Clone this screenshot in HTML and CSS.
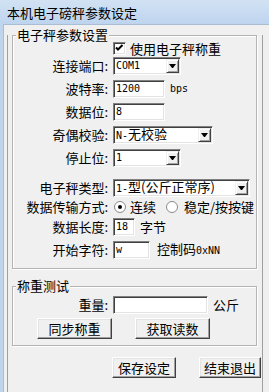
FILE: index.html
```html
<!DOCTYPE html>
<html>

<head>
    <meta charset="utf-8">
    <title>本机电子磅秤参数设定</title>
    <link rel="stylesheet" href="styles.css">
</head>

<body>
    <div class="window">
        <div class="titlebar">本机电子磅秤参数设定</div>
        <div class="client">
            <div class="panel">
                <div class="group group-main">
                    <span class="group-title">电子秤参数设置</span>

                    <div class="row row-check">
                        <span class="label"></span>
                        <span class="checkbox">
                            <svg width="11" height="11" viewBox="0 0 11 11">
                                <polyline points="2,4.5 4,6.5 8.5,2" fill="none" stroke="#000" stroke-width="2" />
                            </svg>
                        </span>
                        <span class="check-text">使用电子秤称重</span>
                    </div>

                    <div class="row row-port">
                        <span class="label">连接端口:</span>
                        <div class="field combo w-port"><span class="en">COM1</span><span class="drop"></span></div>
                    </div>

                    <div class="row">
                        <span class="label">波特率:</span>
                        <div class="field w-short"><span class="en">1200</span></div>
                        <span class="unit en">bps</span>
                    </div>

                    <div class="row">
                        <span class="label">数据位:</span>
                        <div class="field w-short"><span class="en">8</span></div>
                    </div>

                    <div class="row">
                        <span class="label">奇偶校验:</span>
                        <div class="field combo w-parity"><span class="value"><span class="en">N-</span>无校验</span><span class="drop"></span></div>
                    </div>

                    <div class="row">
                        <span class="label">停止位:</span>
                        <div class="field combo w-port"><span class="en">1</span><span class="drop"></span></div>
                    </div>

                    <div class="row row-type">
                        <span class="label">电子秤类型:</span>
                        <div class="field combo w-type"><span class="value"><span class="en">1-</span>型(公斤正常序)</span><span class="drop"></span></div>
                    </div>

                    <div class="row row-mode">
                        <span class="label">数据传输方式:</span>
                        <span class="radio">
                            <svg width="12" height="12" viewBox="0 0 12 12">
                                <circle cx="6" cy="6" r="5.5" fill="#fff" stroke="#8a8a8a" />
                                <circle cx="6" cy="6" r="2" fill="#000" />
                            </svg>
                        </span>
                        <span class="radio-text">连续</span>
                        <span class="radio radio-second">
                            <svg width="12" height="12" viewBox="0 0 12 12">
                                <circle cx="6" cy="6" r="5.5" fill="#fff" stroke="#8a8a8a" />
                            </svg>
                        </span>
                        <span class="radio-text radio-text-second">稳定/按按键</span>
                    </div>

                    <div class="row row-len">
                        <span class="label">数据长度:</span>
                        <div class="field w-len"><span class="en">18</span></div>
                        <span class="unit">字节</span>
                    </div>

                    <div class="row">
                        <span class="label">开始字符:</span>
                        <div class="field w-start"><span class="en">w</span></div>
                        <span class="unit unit-wide">控制码<span class="en">0xNN</span></span>
                    </div>
                </div>

                <div class="group group-test">
                    <span class="group-title">称重测试</span>

                    <div class="row row-weight">
                        <span class="label">重量:</span>
                        <div class="field w-weight"></div>
                        <span class="unit">公斤</span>
                    </div>

                    <div class="button-row">
                        <button class="btn btn-sync">同步称重</button>
                        <button class="btn btn-read">获取读数</button>
                    </div>
                </div>

                <div class="footer">
                    <button class="btn btn-save">保存设定</button>
                    <button class="btn btn-exit">结束退出</button>
                </div>
            </div>
        </div>
    </div>
</body>

</html>
```

FILE: styles.css
```css
body {
    margin: 0;
    font-family: "Noto Sans CJK SC", sans-serif;
    font-size: 13px;
    line-height: 16px;
    color: #000000;
}

.window {
    width: 269px;
    height: 392px;
    background: #bfd5ee;
    display: flex;
    flex-direction: column;
    overflow: hidden;
}

.titlebar {
    height: 24px;
    line-height: 26px;
    padding-left: 7px;
    background: linear-gradient(#d2e2f4, #bed4ee);
}

.client {
    flex: 1;
    margin-left: 3px;
    background: #f0f0f0;
    border-left: 1px solid #a9bdd3;
    border-top: 1px solid #a9bdd3;
}

.panel {
    box-sizing: border-box;
    width: 256px;
    height: 100%;
    margin-left: 3px;
    border-left: 1px solid #a0a0a0;
    border-right: 1px solid #a0a0a0;
}

.en {
    font-family: "DejaVu Sans Mono", monospace;
    font-size: 10px;
}

/* group boxes */
.group {
    position: relative;
    box-sizing: border-box;
    width: 245px;
    margin-left: 4px;
    border: 1px solid #b4b4b4;
    box-shadow: 1px 1px 0 #ffffff, inset 1px 1px 0 #ffffff;
}

.group-main {
    margin-top: 10px;
    padding-bottom: 9px;
}

.group-test {
    margin-top: 17px;
    padding-bottom: 6px;
}

.group-title {
    position: absolute;
    top: -9px;
    left: 3px;
    padding: 0 1px;
    background: #f0f0f0;
}

/* rows */
.row {
    display: flex;
    align-items: center;
    height: 18px;
    margin-top: 5px;
    white-space: nowrap;
}

.row > * {
    flex: none;
}

.label {
    box-sizing: border-box;
    width: 100px;
    padding-right: 5px;
    text-align: right;
}

.row-check {
    height: 13px;
    margin-top: 6px;
}

.row-port {
    margin-top: 2px;
}

.row-type {
    margin-top: 12px;
}

.row-mode {
    height: 14px;
    margin-top: 3px;
}

.row-len {
    margin-top: 4px;
}

.row-weight {
    margin-top: 9px;
}

.unit {
    margin-left: 5px;
}

.unit-wide {
    margin-left: 7px;
}

/* sunken controls */
.field,
.checkbox {
    box-sizing: border-box;
    background: #ffffff;
    border: 1px solid;
    border-color: #808080 #ffffff #ffffff #808080;
    box-shadow: inset 1px 1px 0 #404040, inset -1px -1px 0 #e3e3e3;
}

.field {
    display: flex;
    align-items: center;
    height: 18px;
    padding-left: 2px;
}

.value {
    flex: none;
}

.w-port {
    width: 68px;
}

.w-short {
    width: 52px;
}

.w-parity {
    width: 100px;
}

.w-type {
    width: 137px;
}

.w-len {
    width: 22px;
}

.w-start {
    width: 37px;
}

.w-weight {
    width: 95px;
}

.drop {
    box-sizing: border-box;
    display: flex;
    align-items: center;
    justify-content: center;
    width: 13px;
    height: 14px;
    margin-left: auto;
    margin-right: 1px;
    flex: none;
    background: #f0f0f0;
    border: 1px solid;
    border-color: #f0f0f0 #404040 #404040 #f0f0f0;
    box-shadow: inset 1px 1px 0 #ffffff, inset -1px -1px 0 #a0a0a0;
}

.drop::after {
    content: "";
    width: 1px;
    height: 0;
    border-top: 4px solid #000000;
    border-left: 3px solid transparent;
    border-right: 3px solid transparent;
}

.checkbox {
    display: flex;
    align-items: center;
    justify-content: center;
    width: 13px;
    height: 13px;
}

.check-text {
    margin-left: 4px;
}

.radio {
    display: flex;
    width: 12px;
    height: 12px;
    margin-left: 1px;
}

.radio-text {
    margin-left: 4px;
}

.radio-second {
    margin-left: 10px;
}

.radio-text-second {
    margin-left: 6px;
}

/* buttons */
.btn {
    box-sizing: border-box;
    height: 21px;
    padding: 0;
    font-family: inherit;
    font-size: 13px;
    color: #000000;
    background: #f0f0f0;
    border: 1px solid;
    border-color: #ffffff #404040 #404040 #ffffff;
    box-shadow: inset -1px -1px 0 #a0a0a0, inset 1px 1px 0 #e3e3e3;
}

.button-row {
    display: flex;
    margin-top: 4px;
}

.btn-sync {
    width: 75px;
    margin-left: 24px;
}

.btn-read {
    width: 75px;
    margin-left: 23px;
}

.footer {
    display: flex;
    margin-top: 11px;
}

.btn-save {
    width: 64px;
    margin-left: 104px;
}

.btn-exit {
    width: 62px;
    margin-left: 23px;
}
```
